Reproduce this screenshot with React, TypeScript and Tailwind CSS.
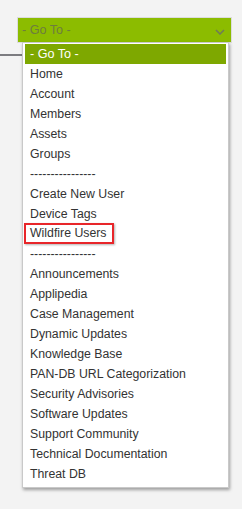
import React from "react";

const items: string[] = [
  "Home",
  "Account",
  "Members",
  "Assets",
  "Groups",
  "----------------",
  "Create New User",
  "Device Tags",
  "Wildfire Users",
  "----------------",
  "Announcements",
  "Applipedia",
  "Case Management",
  "Dynamic Updates",
  "Knowledge Base",
  "PAN-DB URL Categorization",
  "Security Advisories",
  "Software Updates",
  "Support Community",
  "Technical Documentation",
  "Threat DB",
];

export default function App() {
  return (
    <div
      className="relative w-[242px] h-[509px] overflow-hidden bg-[#f3f3f3] text-[12.3px]"
      style={{ fontFamily: '"Liberation Sans", Arial, sans-serif' }}
    >
      <div className="absolute left-0 top-[54px] w-[24px] h-[2px] bg-[#7c7c80]" />
      <div className="pt-[17px] pl-[17px]">
        <div className="w-[215px] h-[26px] bg-[#8cbc00] border border-[#dcdcdc] flex items-center justify-between pl-[4px] pr-[6px]">
          <span className="text-[#6e7d3f] leading-none text-[12.6px]">- Go To -</span>
          <svg width="10" height="6" viewBox="0 0 10 6" className="mt-[3px]">
            <path d="M1 1 L5 5 L9 1" stroke="#6f7a5a" strokeWidth="1.5" fill="none" />
          </svg>
        </div>
      </div>
      <div className="absolute left-[22px] top-[42px] w-[207px] bg-white border border-[#c9c9c9] shadow-[1px_2px_3px_rgba(0,0,0,0.35)] pt-[1px] pb-[3px] px-[2px]">
        <div className="h-[20px] leading-[20px] pl-[5px] bg-[#7ea800] text-white text-[12.6px]">- Go To -</div>
        {items.map((it, i) =>
          it === "Wildfire Users" ? (
            <div key={i} className="h-[20px] text-[#333]">
              <span className="inline-block ml-[-1px] mt-[-1px] h-[21px] leading-[17px] border-2 border-[#e8262a] pl-[4px] pr-[5px] shadow-[1px_1px_2px_rgba(0,0,0,0.3)]">
                {it}
              </span>
            </div>
          ) : (
            <div key={i} className="h-[20px] leading-[20px] pl-[5px] text-[#333] whitespace-nowrap">
              {it}
            </div>
          )
        )}
      </div>
    </div>
  );
}
